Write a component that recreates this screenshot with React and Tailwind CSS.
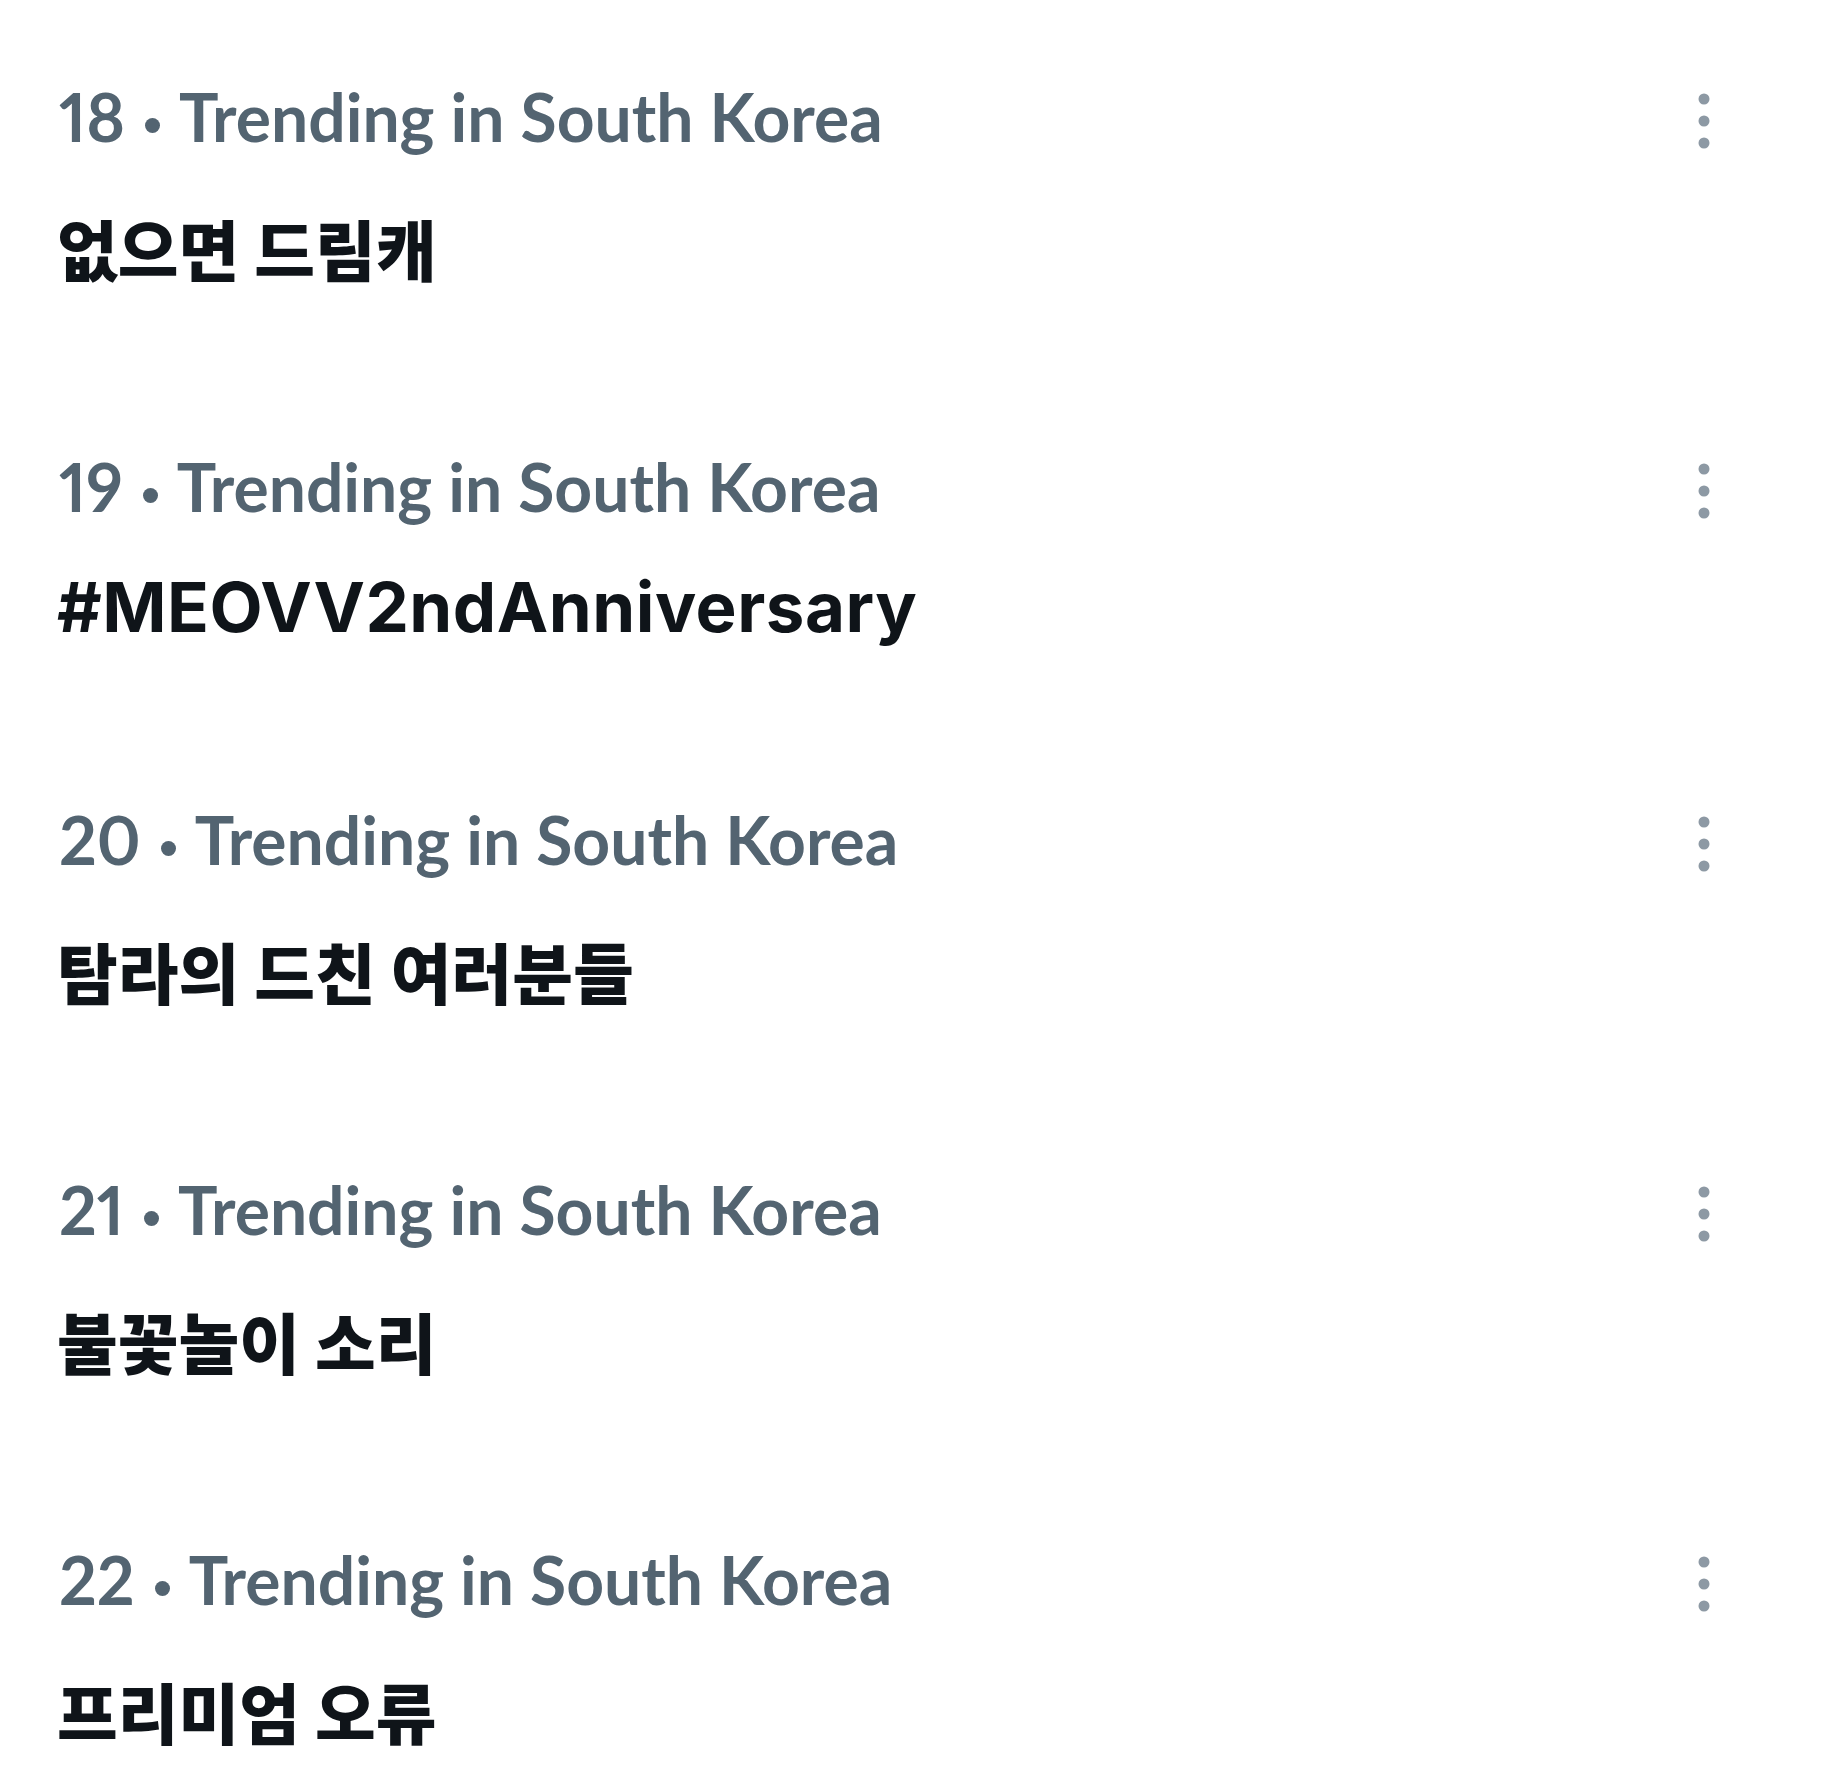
const trends = [
  { rank: 18, title: "없으면 드림캐", latin: false },
  { rank: 19, title: "#MEOVV2ndAnniversary", latin: true },
  { rank: 20, title: "탐라의 드친 여러분들", latin: false },
  { rank: 21, title: "불꽃놀이 소리", latin: false },
  { rank: 22, title: "프리미엄 오류", latin: false },
];

function MoreIcon() {
  return (
    <svg width="24" height="60" viewBox="0 0 24 60" className="text-[#8d99a4]" fill="currentColor">
      <circle cx="12" cy="8" r="5.5" />
      <circle cx="12" cy="30" r="5.5" />
      <circle cx="12" cy="52" r="5.5" />
    </svg>
  );
}

function TrendRow({ rank, title, latin }) {
  return (
    <div className="flex items-start justify-between">
      <div className="flex flex-col">
        <div className="h-[80px] pl-[2px] leading-[80px] whitespace-nowrap text-[66px] font-bold text-[#536471] font-['Lato',sans-serif]">
          <span className="proportional-nums">{rank}</span>
          <span className="inline-block w-[15px] h-[15px] rounded-full bg-[#536471] align-middle ml-[20px] mr-[19px]" />
          <span>Trending in South Korea</span>
        </div>
        <div
          className={
            latin
              ? "mt-[41px] h-[80px] flex items-center text-[69px] font-bold text-[#0f1419] font-['Inter',sans-serif] tracking-[0.5px]"
              : "mt-[45px] mb-[3px] h-[90px] flex items-center text-[66px] font-black text-[#0f1419] font-['Noto_Sans_CJK_KR','Noto_Sans',sans-serif]"
          }
        >
          {title}
        </div>
      </div>
      <div className="h-[80px] mt-[4px] flex items-center pr-[120px]">
        <MoreIcon />
      </div>
    </div>
  );
}

export default function App() {
  return (
    <div className="w-[1836px] h-[1789px] bg-white pl-[57px] pt-[77px] overflow-hidden">
      <div className="flex flex-col gap-[152px]">
        {trends.map((t) => (
          <TrendRow key={t.rank} {...t} />
        ))}
      </div>
    </div>
  );
}
